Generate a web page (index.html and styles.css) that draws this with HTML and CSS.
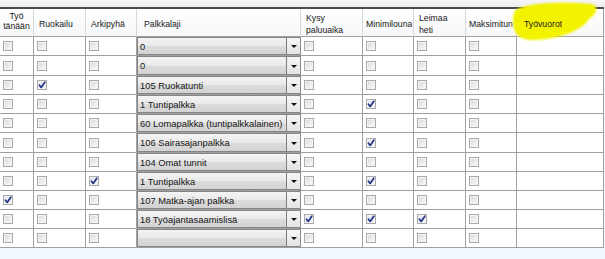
FILE: index.html
```html
<!DOCTYPE html>
<html lang="fi">
<head>
<meta charset="utf-8">
<title>Palkkalajit</title>
<link rel="stylesheet" href="styles.css">
</head>
<body>
<div class="topstrip"></div>
<div class="wrap">
  <svg class="marker" width="605" height="50" viewBox="0 0 605 50" aria-hidden="true">
    <defs><filter id="soft" x="-10%" y="-20%" width="120%" height="140%"><feGaussianBlur stdDeviation="0.8"/></filter></defs>
    <path d="M514 13 C 516 3, 560 1, 592 4 C 598 5, 598 14, 590 18 C 584 28, 566 38, 536 40 C 518 41, 510 32, 514 13 Z" fill="#f3f300" filter="url(#soft)"/>
  </svg>
  <div class="grid">
    <div class="hd hd-c hd-up"><span>Työ tänään</span></div>
    <div class="hd"><span>Ruokailu</span></div>
    <div class="hd"><span>Arkipyhä</span></div>
    <div class="hd hd-wide"><span>Palkkalaji</span></div>
    <div class="hd"><span>Kysy paluuaika</span></div>
    <div class="hd hd-tight"><span>Minimilouna</span></div>
    <div class="hd"><span>Leimaa heti</span></div>
    <div class="hd hd-tight"><span>Maksimitun</span></div>
    <div class="hd hd-wide hd-last"><span class="over">Työvuorot</span></div>

    <!-- row 1 -->
    <div class="c c1"><i class="cb"></i></div><div class="c"><i class="cb"></i></div><div class="c"><i class="cb"></i></div>
    <div class="c cc"><div class="combo"><span class="ct">0</span><span class="cbtn"><b class="arr"></b></span></div></div>
    <div class="c"><i class="cb"></i></div><div class="c"><i class="cb"></i></div><div class="c"><i class="cb"></i></div><div class="c"><i class="cb"></i></div><div class="c"></div>
    <!-- row 2 -->
    <div class="c c1"><i class="cb"></i></div><div class="c"><i class="cb"></i></div><div class="c"><i class="cb"></i></div>
    <div class="c cc"><div class="combo"><span class="ct">0</span><span class="cbtn"><b class="arr"></b></span></div></div>
    <div class="c"><i class="cb"></i></div><div class="c"><i class="cb"></i></div><div class="c"><i class="cb"></i></div><div class="c"><i class="cb"></i></div><div class="c"></div>
    <!-- row 3 -->
    <div class="c c1"><i class="cb"></i></div><div class="c"><i class="cb on"><svg viewBox="0 0 8 8"><path d="M1.4 4.2 L3.2 6.4 L6.8 1.2"/></svg></i></div><div class="c"><i class="cb"></i></div>
    <div class="c cc"><div class="combo"><span class="ct">105 Ruokatunti</span><span class="cbtn"><b class="arr"></b></span></div></div>
    <div class="c"><i class="cb"></i></div><div class="c"><i class="cb"></i></div><div class="c"><i class="cb"></i></div><div class="c"><i class="cb"></i></div><div class="c"></div>
    <!-- row 4 -->
    <div class="c c1"><i class="cb"></i></div><div class="c"><i class="cb"></i></div><div class="c"><i class="cb"></i></div>
    <div class="c cc"><div class="combo"><span class="ct">1 Tuntipalkka</span><span class="cbtn"><b class="arr"></b></span></div></div>
    <div class="c"><i class="cb"></i></div><div class="c"><i class="cb on"><svg viewBox="0 0 8 8"><path d="M1.4 4.2 L3.2 6.4 L6.8 1.2"/></svg></i></div><div class="c"><i class="cb"></i></div><div class="c"><i class="cb"></i></div><div class="c"></div>
    <!-- row 5 -->
    <div class="c c1"><i class="cb"></i></div><div class="c"><i class="cb"></i></div><div class="c"><i class="cb"></i></div>
    <div class="c cc"><div class="combo"><span class="ct">60 Lomapalkka (tuntipalkkalainen)</span><span class="cbtn"><b class="arr"></b></span></div></div>
    <div class="c"><i class="cb"></i></div><div class="c"><i class="cb"></i></div><div class="c"><i class="cb"></i></div><div class="c"><i class="cb"></i></div><div class="c"></div>
    <!-- row 6 -->
    <div class="c c1"><i class="cb"></i></div><div class="c"><i class="cb"></i></div><div class="c"><i class="cb"></i></div>
    <div class="c cc"><div class="combo"><span class="ct">106 Sairasajanpalkka</span><span class="cbtn"><b class="arr"></b></span></div></div>
    <div class="c"><i class="cb"></i></div><div class="c"><i class="cb on"><svg viewBox="0 0 8 8"><path d="M1.4 4.2 L3.2 6.4 L6.8 1.2"/></svg></i></div><div class="c"><i class="cb"></i></div><div class="c"><i class="cb"></i></div><div class="c"></div>
    <!-- row 7 -->
    <div class="c c1"><i class="cb"></i></div><div class="c"><i class="cb"></i></div><div class="c"><i class="cb"></i></div>
    <div class="c cc"><div class="combo"><span class="ct">104 Omat tunnit</span><span class="cbtn"><b class="arr"></b></span></div></div>
    <div class="c"><i class="cb"></i></div><div class="c"><i class="cb"></i></div><div class="c"><i class="cb"></i></div><div class="c"><i class="cb"></i></div><div class="c"></div>
    <!-- row 8 -->
    <div class="c c1"><i class="cb"></i></div><div class="c"><i class="cb"></i></div><div class="c"><i class="cb on"><svg viewBox="0 0 8 8"><path d="M1.4 4.2 L3.2 6.4 L6.8 1.2"/></svg></i></div>
    <div class="c cc"><div class="combo"><span class="ct">1 Tuntipalkka</span><span class="cbtn"><b class="arr"></b></span></div></div>
    <div class="c"><i class="cb"></i></div><div class="c"><i class="cb on"><svg viewBox="0 0 8 8"><path d="M1.4 4.2 L3.2 6.4 L6.8 1.2"/></svg></i></div><div class="c"><i class="cb"></i></div><div class="c"><i class="cb"></i></div><div class="c"></div>
    <!-- row 9 -->
    <div class="c c1"><i class="cb on"><svg viewBox="0 0 8 8"><path d="M1.4 4.2 L3.2 6.4 L6.8 1.2"/></svg></i></div><div class="c"><i class="cb"></i></div><div class="c"><i class="cb"></i></div>
    <div class="c cc"><div class="combo"><span class="ct">107 Matka-ajan palkka</span><span class="cbtn"><b class="arr"></b></span></div></div>
    <div class="c"><i class="cb"></i></div><div class="c"><i class="cb"></i></div><div class="c"><i class="cb"></i></div><div class="c"><i class="cb"></i></div><div class="c"></div>
    <!-- row 10 -->
    <div class="c c1"><i class="cb"></i></div><div class="c"><i class="cb"></i></div><div class="c"><i class="cb"></i></div>
    <div class="c cc"><div class="combo"><span class="ct">18 Työajantasaamislisä</span><span class="cbtn"><b class="arr"></b></span></div></div>
    <div class="c"><i class="cb on"><svg viewBox="0 0 8 8"><path d="M1.4 4.2 L3.2 6.4 L6.8 1.2"/></svg></i></div><div class="c"><i class="cb on"><svg viewBox="0 0 8 8"><path d="M1.4 4.2 L3.2 6.4 L6.8 1.2"/></svg></i></div><div class="c"><i class="cb on"><svg viewBox="0 0 8 8"><path d="M1.4 4.2 L3.2 6.4 L6.8 1.2"/></svg></i></div><div class="c"><i class="cb"></i></div><div class="c"></div>
    <!-- row 11 -->
    <div class="c c1"><i class="cb"></i></div><div class="c"><i class="cb"></i></div><div class="c"><i class="cb"></i></div>
    <div class="c cc"><div class="combo"><span class="ct"></span><span class="cbtn"><b class="arr"></b></span></div></div>
    <div class="c"><i class="cb"></i></div><div class="c"><i class="cb"></i></div><div class="c"><i class="cb"></i></div><div class="c"><i class="cb"></i></div><div class="c"></div>
  </div>
</div>
</body>
</html>
```

FILE: styles.css
```css
html, body {
  margin: 0;
  padding: 0;
}
body {
  width: 605px;
  height: 259px;
  overflow: hidden;
  background: #f0faff;
  font-family: "Liberation Sans", Arial, sans-serif;
  color: #1c1c1c;
}
.topstrip {
  height: 7px;
  background: linear-gradient(#f7f7f7, #ececec);
}
.wrap {
  position: relative;
}
.marker {
  position: absolute;
  left: 0;
  top: -7px;
  z-index: 1;
  pointer-events: none;
}
.grid {
  display: grid;
  width: 604px;
  grid-template-columns: 34px 52px 51px 164px 62px 51px 52px 51px 87px;
  grid-template-rows: 28px 19px 20px 19px 19px 19px 20px 19px 19px 19px 19px 19px;
  border-top: 2px solid #4b4b4b;
  background: #ffffff;
}
.hd {
  box-sizing: border-box;
  display: flex;
  align-items: center;
  padding: 4px 3px 0 5px;
  font-size: 8.7px;
  line-height: 11.5px;
  background: linear-gradient(#ffffff, #f6f7f9);
  border-right: 1px solid #d9d9d9;
  border-bottom: 1px solid #a0a0a0;
  overflow: hidden;
  color: #202020;
}
.hd span {
  display: block;
  overflow: hidden;
  white-space: normal;
}
.hd-c {
  justify-content: center;
  text-align: center;
  padding: 0 0 4px 0;
  line-height: 10px;
}
.hd-tight span {
  white-space: nowrap;
}
.hd-last span {
  white-space: nowrap;
}
.hd-tight {
  padding-left: 3px;
  padding-right: 0;
}
.hd-wide {
  padding-left: 7px;
}
.hd-last {
  border-right: 1px solid #a0a0a0;
}
.over {
  position: relative;
  z-index: 2;
}
.c {
  box-sizing: border-box;
  display: flex;
  align-items: center;
  padding-left: 3px;
  border-right: 1px solid #a0a0a0;
  border-bottom: 1px solid #a0a0a0;
  background: #ffffff;
}
.c1 {
  padding-left: 3px;
}
.cb {
  box-sizing: border-box;
  display: flex;
  align-items: center;
  justify-content: center;
  width: 10px;
  height: 10px;
  border: 1px solid #a9a9a9;
  background: linear-gradient(135deg, #d6d6d6, #eeeeee 60%, #f8f8f8);
  box-shadow: inset 0 0 0 1px #f4f4f4;
}
.cb.on {
  background: linear-gradient(135deg, #dfe3ee, #f6f7fb);
}
.cb svg {
  width: 8px;
  height: 8px;
  fill: none;
  stroke: #233386;
  stroke-width: 1.7;
  stroke-linecap: round;
  stroke-linejoin: round;
}
.cc {
  padding: 0;
  border-right: 1px solid #8a8a8a;
}
.combo {
  box-sizing: border-box;
  display: flex;
  width: 100%;
  height: 100%;
  border: 1px solid #858585;
  border-right: none;
}
.ct {
  flex: 1;
  display: flex;
  align-items: center;
  padding-left: 2px;
  font-size: 9.4px;
  white-space: nowrap;
  overflow: hidden;
  color: #161616;
  background: linear-gradient(#f4f4f4, #e9e9e9 50%, #dcdcdc 51%, #d3d3d3);
  border-right: 1px solid #7d7d7d;
}
.cbtn {
  width: 13px;
  display: flex;
  align-items: center;
  justify-content: center;
  background: linear-gradient(#f6f6f6, #e4e4e4);
}
.arr {
  width: 0;
  height: 0;
  border-left: 3px solid transparent;
  border-right: 3px solid transparent;
  border-top: 3px solid #111111;
  margin-top: 1px;
}
```
